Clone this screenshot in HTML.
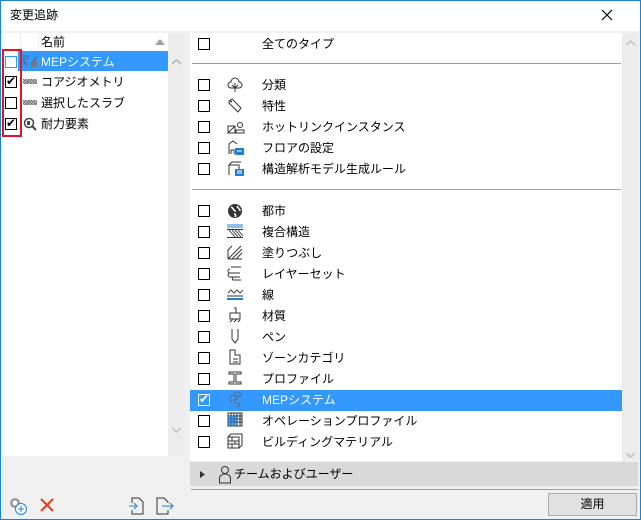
<!DOCTYPE html><html><head><meta charset="utf-8"><style>
*{margin:0;padding:0;box-sizing:border-box}
body{width:641px;height:520px;overflow:hidden;background:#f0f0f0;font-family:"Liberation Sans","Noto Sans CJK JP",sans-serif;font-size:12px;color:#000;position:relative}
.a{position:absolute}
.frame{left:0;top:0;width:641px;height:520px;border:1px solid #1883d7;pointer-events:none;z-index:9}
.cb{position:absolute;width:12px;height:12px;border:1px solid #000;background:#fff}
.t{position:absolute;white-space:nowrap;line-height:14px}
</style></head><body>
<div class="a frame"></div>
<div class="a" style="left:0;top:0;width:641px;height:31px;background:#fff"></div>
<div class="t" style="left:10px;top:8px;font-size:12px">変更追跡</div>
<svg class="a" style="left:601px;top:9px" width="12" height="12"><path d="M1 1L11 11M11 1L1 11" stroke="#000" stroke-width="1.2"/></svg>

<!-- left list -->
<div class="a" style="left:1px;top:33px;width:167px;height:423px;background:#fff"></div>
<div class="a" style="left:20px;top:33px;width:1px;height:17px;background:#eee"></div>
<div class="a" style="left:38px;top:33px;width:1px;height:17px;background:#eee"></div>
<div class="t" style="left:41px;top:35px">名前</div>
<svg class="a" style="left:155px;top:39px" width="10" height="6"><path d="M0 6L5 0L10 6Z" fill="#a0a0a0"/></svg>
<div class="a" style="left:18px;top:51px;width:150px;height:20px;background:#3399ff"></div>
<div class="a" style="left:168px;top:33px;width:17px;height:423px;background:#ececec"></div>
<svg class="a" style="left:172px;top:59px" width="9" height="6"><path d="M0 5L4.5 1L9 5" stroke="#b0b0b0" fill="none" stroke-width="1.5"/></svg>
<svg class="a" style="left:172px;top:427px" width="9" height="6"><path d="M0 1L4.5 5L9 1" stroke="#c0c0c0" fill="none" stroke-width="1.5"/></svg>

<div class="cb" style="left:5px;top:56px;border-color:#3399ff;background:#fff"></div>
<div class="cb" style="left:5px;top:76px"></div><div class="t" style="left:5px;top:74px;font-size:12px;width:12px;text-align:center">✔</div>
<div class="cb" style="left:5px;top:97px"></div>
<div class="cb" style="left:5px;top:118px"></div><div class="t" style="left:5px;top:116px;font-size:12px;width:12px;text-align:center">✔</div>
<div class="a" style="left:2px;top:49px;width:20px;height:88px;border:2px solid #e81123"></div>

<svg class="a" style="left:23px;top:54px" width="14" height="14"><path d="M1 1v7l3 3M4 1v5M8 12h6M9 8l5-5" stroke="#555" fill="none"/><path d="M8 7h6v6h-6z" fill="#777"/></svg>
<div class="t" style="left:41px;top:55px;color:#fff">MEPシステム</div>
<div class="a" style="left:23px;top:79px;width:14px;height:5px;background:repeating-linear-gradient(135deg,#666 0 1px,#ccc 1px 2px)"></div>
<div class="t" style="left:41px;top:75px">コアジオメトリ</div>
<div class="a" style="left:23px;top:100px;width:14px;height:5px;background:repeating-linear-gradient(135deg,#666 0 1px,#ccc 1px 2px)"></div>
<div class="t" style="left:41px;top:96px">選択したスラブ</div>
<svg class="a" style="left:23px;top:117px" width="14" height="14"><circle cx="6" cy="6" r="4.5" stroke="#444" fill="none" stroke-width="1.5"/><path d="M9 9l4 4" stroke="#444" stroke-width="2"/><path d="M4 4h3v4h-3z" fill="#444"/></svg>
<div class="t" style="left:41px;top:117px">耐力要素</div>

<!-- left bottom icons -->
<svg class="a" style="left:8px;top:496px" width="20" height="20"><circle cx="7" cy="7" r="5" fill="#999"/><circle cx="7" cy="7" r="2.5" fill="#fff"/><circle cx="13" cy="13" r="5.5" fill="#fff" stroke="#1e7fd6"/><path d="M13 10v6M10 13h6" stroke="#1e7fd6"/></svg>
<svg class="a" style="left:40px;top:498px" width="14" height="14"><path d="M1 1L13 13M13 1L1 13" stroke="#e8391f" stroke-width="2"/></svg>
<svg class="a" style="left:128px;top:497px" width="16" height="18"><path d="M4 6V1h7l4 4v12H4v-4" stroke="#333" fill="none"/><path d="M1 9h8M6 6l3 3-3 3" stroke="#1e7fd6" fill="none"/></svg>
<svg class="a" style="left:156px;top:497px" width="18" height="18"><path d="M12 6V5L8 1H1v16h11v-4" stroke="#333" fill="none"/><path d="M6 9h11M14 6l3 3-3 3" stroke="#1e7fd6" fill="none"/></svg>

<!-- right list -->
<div class="a" style="left:190px;top:33px;width:432px;height:428px;background:#fff"></div>
<div class="a" style="left:622px;top:33px;width:16px;height:428px;background:#ececec"></div>
<svg class="a" style="left:626px;top:40px" width="9" height="6"><path d="M0 5L4.5 1L9 5" stroke="#c0c0c0" fill="none" stroke-width="1.5"/></svg>
<svg class="a" style="left:626px;top:452px" width="9" height="6"><path d="M0 1L4.5 5L9 1" stroke="#c0c0c0" fill="none" stroke-width="1.5"/></svg>
<div class="a" style="left:192px;top:63px;width:429px;height:1px;background:#a0a0a0"></div>
<div class="a" style="left:192px;top:189px;width:429px;height:1px;background:#a0a0a0"></div>
<div class="a" style="left:190px;top:390px;width:432px;height:21px;background:#3399ff"></div>

<div class="cb" style="left:198px;top:38px"></div><div class="t" style="left:262px;top:37px">全てのタイプ</div>

<div class="cb" style="left:198px;top:79px"></div><div class="t" style="left:262px;top:78px">分類</div>
<svg class="a" style="left:227px;top:77px" width="16" height="16"><path d="M4 11a3 3 0 0 1 0-6a4 4 0 0 1 8 0a3 3 0 0 1 0 6zM8 6v9M5 8l3 3 3-3" stroke="#333" fill="none"/></svg>
<div class="cb" style="left:198px;top:100px"></div><div class="t" style="left:262px;top:99px">特性</div>
<svg class="a" style="left:227px;top:98px" width="16" height="16"><path d="M2 3l3-2 9 9-3 4-9-9z" stroke="#333" fill="none"/><circle cx="4" cy="3.5" r="1" fill="#333"/></svg>
<div class="cb" style="left:198px;top:121px"></div><div class="t" style="left:262px;top:120px">ホットリンクインスタンス</div>
<svg class="a" style="left:227px;top:120px" width="18" height="14"><path d="M1 6h7v7H1zM1 13L8 6" stroke="#333" fill="none"/><circle cx="13" cy="5" r="2.5" stroke="#333" fill="none"/><path d="M9 13v-3h8v3z" stroke="#333" fill="none"/></svg>
<div class="cb" style="left:198px;top:142px"></div><div class="t" style="left:262px;top:141px">フロアの設定</div>
<svg class="a" style="left:227px;top:139px" width="18" height="17"><path d="M2 15V5l4-3 4 3M4 15v-4h3v4" stroke="#333" fill="none"/><rect x="8" y="9" width="9" height="7" fill="#1e7fd6"/><path d="M10 12h5" stroke="#fff"/></svg>
<div class="cb" style="left:198px;top:163px"></div><div class="t" style="left:262px;top:162px">構造解析モデル生成ルール</div>
<svg class="a" style="left:227px;top:160px" width="18" height="17"><path d="M2 15V5h10v4M2 5l3-3h9" stroke="#333" fill="none"/><rect x="8" y="9" width="9" height="7" fill="#1e7fd6"/><path d="M10 11h5M10 13h5" stroke="#fff"/></svg>

<div class="cb" style="left:198px;top:205px"></div><div class="t" style="left:262px;top:204px">都市</div>
<svg class="a" style="left:227px;top:203px" width="16" height="16"><circle cx="8" cy="8" r="7" fill="#333"/><path d="M4 4c3 1 2 4 5 4M10 3c1 2 3 3 3 5M7 11c2 0 2 2 1 3" stroke="#fff" stroke-width="1.5" fill="none"/></svg>
<div class="cb" style="left:198px;top:226px"></div><div class="t" style="left:262px;top:225px">複合構造</div>
<svg class="a" style="left:227px;top:224px" width="16" height="15"><path d="M0 1h16M0 3h16" stroke="#1e7fd6"/><path d="M0 5.5h16M0 13.5h16" stroke="#333"/><path d="M2 6l6 7M5 6l6 7M8 6l6 7M11 6l5 6" stroke="#555"/></svg>
<div class="cb" style="left:198px;top:247px"></div><div class="t" style="left:262px;top:246px">塗りつぶし</div>
<svg class="a" style="left:227px;top:245px" width="16" height="15"><path d="M1 14L14 1M1 14h14M5 14L15 4M9 14l6-6M1 14V5l4-4" stroke="#333" fill="none"/></svg>
<div class="cb" style="left:198px;top:268px"></div><div class="t" style="left:262px;top:267px">レイヤーセット</div>
<svg class="a" style="left:227px;top:265px" width="16" height="16"><path d="M4 2h10M3 4a2 2 0 0 0 0 4h10M3 8a2 2 0 0 0 0 4h10M6 12a2 2 0 0 0 0 3h8" stroke="#333" fill="none"/></svg>
<div class="cb" style="left:198px;top:289px"></div><div class="t" style="left:262px;top:288px">線</div>
<svg class="a" style="left:227px;top:287px" width="16" height="14"><path d="M1 6l3-3 3 3 3-3 3 3 3-3" stroke="#444" fill="none"/><path d="M0 9h16" stroke="#333"/><path d="M0 12h16" stroke="#1e7fd6" stroke-width="2"/></svg>
<div class="cb" style="left:198px;top:310px"></div><div class="t" style="left:262px;top:309px">材質</div>
<svg class="a" style="left:227px;top:307px" width="16" height="16"><path d="M7 1h2v5M3 6h10v6H3zM3 15l3-3M7 15l3-3M11 15l2-2" stroke="#333" fill="none"/></svg>
<div class="cb" style="left:198px;top:331px"></div><div class="t" style="left:262px;top:330px">ペン</div>
<svg class="a" style="left:227px;top:328px" width="16" height="16"><path d="M5 1v10l3 4 3-4V1" stroke="#333" fill="none"/></svg>
<div class="cb" style="left:198px;top:352px"></div><div class="t" style="left:262px;top:351px">ゾーンカテゴリ</div>
<svg class="a" style="left:227px;top:349px" width="16" height="16"><path d="M3 1h5v5h5v9H3zM6 10h5M6 13h5" stroke="#333" fill="none"/></svg>
<div class="cb" style="left:198px;top:373px"></div><div class="t" style="left:262px;top:372px">プロファイル</div>
<svg class="a" style="left:227px;top:370px" width="16" height="16"><path d="M2 2h12v2H9v8h5v2H2v-2h5V4H2z" stroke="#333" fill="none"/></svg>
<div class="cb" style="left:198px;top:394px;border-color:#fff;background:#3399ff"></div><div class="t" style="left:198px;top:392px;color:#fff;width:12px;text-align:center">✔</div>
<div class="t" style="left:262px;top:393px;color:#fff">MEPシステム</div>
<svg class="a" style="left:227px;top:391px" width="16" height="17"><path d="M10 1a4 3 0 0 1 4 4H7a4 3 0 0 1 3-4zM10 5v3c-4 0-4 4 0 4s4 3-1 4M5 4a5 5 0 0 0 0 8" stroke="#667" fill="none"/></svg>
<div class="cb" style="left:198px;top:415px"></div><div class="t" style="left:262px;top:414px">オペレーションプロファイル</div>
<svg class="a" style="left:227px;top:412px" width="16" height="15"><path d="M1 1h14v13H1zM1 4h14M1 7h14M1 10h14M4 1v13M7 1v13M10 1v13M13 1v13" stroke="#333" fill="none"/><rect x="1" y="4" width="9" height="10" fill="#1e7fd6" opacity=".7"/></svg>
<div class="cb" style="left:198px;top:436px"></div><div class="t" style="left:262px;top:435px">ビルディングマテリアル</div>
<svg class="a" style="left:227px;top:433px" width="16" height="16"><path d="M1 4h11v11H1zM1 4l3-3h11v11l-3 3M1 8h11M1 11h11M5 4v4M8 8v3M5 11v4" stroke="#333" fill="none"/></svg>

<!-- team bar -->
<div class="a" style="left:190px;top:462px;width:448px;height:24px;background:#d9d9d9"></div>
<svg class="a" style="left:200px;top:471px" width="5" height="7"><path d="M0 0L5 3.5L0 7Z" fill="#333"/></svg>
<svg class="a" style="left:218px;top:465px" width="14" height="19"><circle cx="7" cy="5" r="3.5" stroke="#333" fill="none"/><path d="M1.5 18v-5a5.5 4 0 0 1 11 0v5z" stroke="#333" fill="none"/></svg>
<div class="t" style="left:234px;top:467px">チームおよびユーザー</div>
<div class="a" style="left:191px;top:489px;width:447px;height:1px;background:#a0a0a0"></div>
<div class="a" style="left:548px;top:493px;width:89px;height:23px;background:#e1e1e1;border:1px solid #adadad"></div>
<div class="t" style="left:548px;top:497px;width:89px;text-align:center">適用</div>
</body></html>
